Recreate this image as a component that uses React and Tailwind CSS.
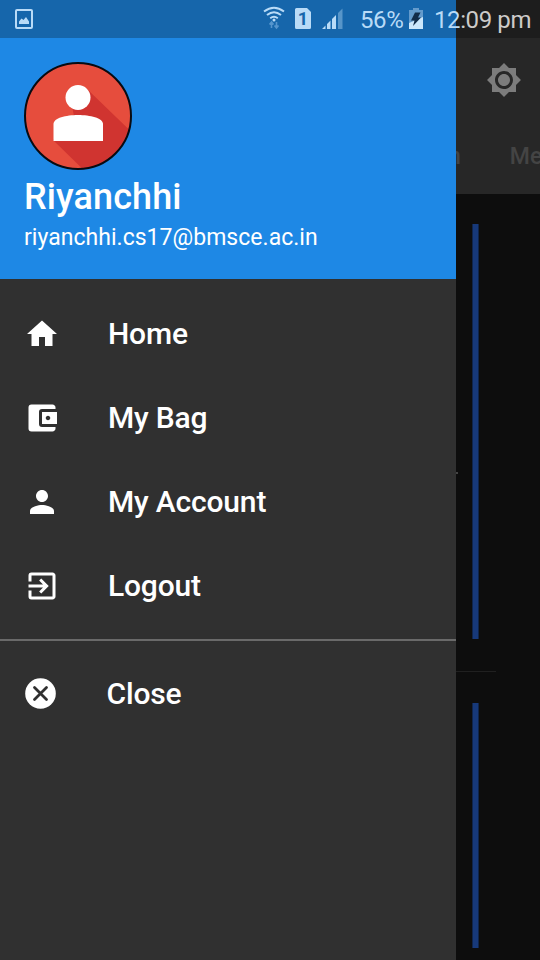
import React from "react";
import { MdHome, MdAccountBalanceWallet, MdPerson, MdExitToApp, MdBrightness7 } from "react-icons/md";

const menuItems = [
  { label: "Home", Icon: MdHome },
  { label: "My Bag", Icon: MdAccountBalanceWallet },
  { label: "My Account", Icon: MdPerson },
  { label: "Logout", Icon: MdExitToApp },
];

function StatusBar() {
  return (
    <div className="absolute inset-x-0 top-0 flex h-[38px] items-center bg-black/25 text-[#b9dbf7]">
      <svg className="ml-[15px] h-5 w-[18px] shrink-0" viewBox="0 0 18 20">
        <rect x="1" y="1" width="16" height="18" rx="1" fill="none" stroke="currentColor" strokeWidth="2" />
        <path d="M4 15v-2.500l2.500-3 2 1.500L11 8l3 4.500V15z" fill="currentColor" />
      </svg>
      <svg className="mb-[2px] ml-[230px] h-6 w-[22px] shrink-0" viewBox="0 0 22 24" fill="none" stroke="currentColor" strokeWidth="2">
        <path d="M1 5.500Q11-2 21 5.500M4 9Q11 3.500 18 9M7.200 12.200Q11 9.500 14.800 12.200" />
        <circle cx="11" cy="14" r="1.500" fill="currentColor" stroke="none" />
        <path d="M8.500 22v-6M6.500 18.500l2-2.500 2 2.500M13.500 16v6M11.500 19.500l2 2.500 2-2.500" stroke="#5595cd" strokeWidth="1.600" />
      </svg>
      <svg className="mb-px ml-[10px] h-[21px] w-4 shrink-0" viewBox="0 0 16 21">
        <path d="M1.500 0H12l4 4v15.500a1.500 1.500 0 0 1-1.500 1.500h-13A1.500 1.500 0 0 1 0 19.500v-18A1.500 1.500 0 0 1 1.500 0z" fill="currentColor" />
        <text x="8" y="17" textAnchor="middle" fontFamily="Roboto, sans-serif" fontSize="18" fontWeight="700" fill="#1766ab">1</text>
      </svg>
      <svg className="mb-px ml-[11px] h-[21px] w-[21px] shrink-0" viewBox="0 0 21 21" fill="currentColor">
        <path d="M0 21l3.500-3.500V21zM5 16l3.500-3.500V21H5zM10 11l4-4v14h-4z" />
        <path d="M16 5l4.500-4.500V21H16z" opacity=".4" />
      </svg>
      <span className="ml-[17px] w-[44px] shrink-0 whitespace-nowrap pt-[2px] text-2xl leading-none tracking-[-0.4px]">56%</span>
      <svg className="mb-px ml-[5px] h-[21px] w-[14px] shrink-0" viewBox="0 0 14 21">
        <path d="M4 0h6v2h4v19H0V2h4z" fill="#649bcc" />
        <path d="M0 21V15L14 9v12z" fill="#cce7fb" />
        <path d="M6 4.500h5.500L9 9.500h3L4 18l1.500-5.500H2z" fill="#122c49" />
      </svg>
      <span className="ml-[11px] shrink-0 whitespace-nowrap pt-[2px] text-2xl leading-none tracking-[-0.4px]">
        12<span className="text-[#cdcbc9]">:09 pm</span>
      </span>
    </div>
  );
}

function Avatar() {
  return (
    <svg className="h-[108px] w-[108px]" viewBox="0 0 108 108">
      <defs>
        <clipPath id="avatar-circle"><circle cx="54" cy="54" r="53" /></clipPath>
      </defs>
      <g clipPath="url(#avatar-circle)">
        <rect width="108" height="108" fill="#e64d3d" />
        <path d="M62 26L120 82V120H72L29 78L50 54L48 44z" fill="#d03430" />
      </g>
      <circle cx="54" cy="35.500" r="12.500" fill="#fff" />
      <path d="M29.500 79V62C29.500 56 42 53 54 53S79 56 79 62V79z" fill="#fff" />
      <circle cx="54" cy="54" r="53" fill="none" stroke="#080b12" strokeWidth="2" />
    </svg>
  );
}

function Drawer() {
  return (
    <aside className="absolute inset-y-0 left-0 flex w-[456px] flex-col bg-[#303030] text-white">
      <header className="flex h-[279px] shrink-0 flex-col bg-[#1e88e5] px-6 pt-[62px]">
        <Avatar />
        <h1 className="mt-[5px] h-11 text-4xl font-medium leading-[44px] tracking-[0.1px]">Riyanchhi</h1>
        <p className="mt-[5px] text-[23px] leading-7 tracking-[0.03px]">riyanchhi.cs17@bmsce.ac.in</p>
      </header>
      <nav className="pt-[13px]">
        {menuItems.map(({ label, Icon }) => (
          <div key={label} className="flex h-[84px] items-center gap-12 px-6">
            <Icon size={36} />
            <span className="text-[30px] font-medium leading-9 tracking-[-0.18px]">{label}</span>
          </div>
        ))}
      </nav>
      <div className="mt-[11px] h-[2px] shrink-0 bg-[#6a6a6a]" />
      <div className="mt-[11px] flex h-[84px] shrink-0 items-center gap-[50.5px] pl-[25px]">
        <svg className="mb-px h-[31px] w-[31px]" viewBox="0 0 31 31">
          <circle cx="15.500" cy="15.500" r="15.300" fill="#fff" />
          <path d="M9.500 9.500l12 12M21.500 9.500l-12 12" stroke="#303030" strokeWidth="2.800" strokeLinecap="round" />
        </svg>
        <span className="text-[30px] font-medium leading-9 tracking-[-0.15px]">Close</span>
      </div>
    </aside>
  );
}

export default function App() {
  return (
    <div className="relative flex h-[960px] w-[540px] flex-col overflow-hidden bg-[#0d0d0d] font-['Roboto',sans-serif]">
      <div className="flex h-[194px] shrink-0 flex-col items-end bg-[#272727] pt-[62px]">
        <MdBrightness7 className="mr-[18px] text-[#7c7c7c]" size={36} />
        <div className="mt-[45px] flex w-[92px] gap-[49px] whitespace-nowrap text-[23px] font-medium leading-7 text-[#444]">
          <span>n</span>
          <span>Me</span>
        </div>
      </div>
      <div className="ml-[472px] mt-[30px] h-[415px] w-[7px] shrink-0 border-x border-[#10254b] bg-[#17397a]" />
      <div className="mt-8 h-px w-[496px] shrink-0 bg-[#202020]" />
      <div className="ml-[472px] mt-[31px] h-[245px] w-[7px] shrink-0 border-x border-[#10254b] bg-[#17397a]" />
      <div className="absolute left-[456px] top-[472px] h-[2px] w-[2px] bg-[#444]" />
      <Drawer />
      <StatusBar />
    </div>
  );
}
